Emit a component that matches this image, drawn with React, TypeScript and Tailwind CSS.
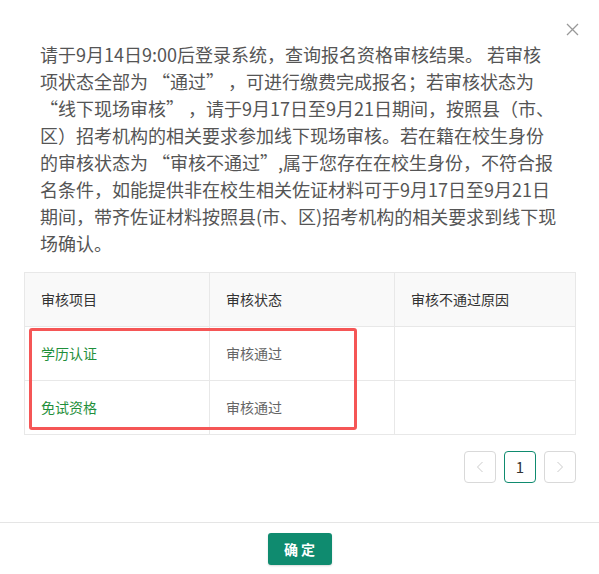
import React from "react";

const lines = [
  "请于9月14日9:00后登录系统，查询报名资格审核结果。 若审核",
  "项状态全部为 “通过” ，可进行缴费完成报名；若审核状态为",
  "“线下现场审核” ，请于9月17日至9月21日期间，按照县（市、",
  "区）招考机构的相关要求参加线下现场审核。若在籍在校生身份",
  "的审核状态为 “审核不通过”,属于您存在在校生身份，不符合报",
  "名条件，如能提供非在校生相关佐证材料可于9月17日至9月21日",
  "期间，带齐佐证材料按照县(市、区)招考机构的相关要求到线下现",
  "场确认。",
];

const rows = [
  { item: "学历认证", status: "审核通过" },
  { item: "免试资格", status: "审核通过" },
];

export default function App() {
  return (
    <div
      className="relative w-[599px] h-[574px] bg-white overflow-hidden"
      style={{ fontFamily: '"Noto Sans CJK SC", "Noto Sans", sans-serif' }}
    >
      <button className="absolute left-[565px] top-[22px] w-[15px] h-[15px] flex items-center justify-center">
        <svg width="13" height="13" viewBox="0 0 13 13">
          <path d="M1 1 L12 12 M12 1 L1 12" stroke="#999" strokeWidth="1.3" fill="none" />
        </svg>
      </button>

      <div className="pt-[41px] px-10 text-[18px] leading-[27px] text-[#555]">
        {lines.map((l, i) => (
          <span key={i} className="block whitespace-nowrap">
            {l}
          </span>
        ))}
      </div>

      <div className="relative ml-6 mt-[15px] w-[552px] border border-[#e8e8e8] text-[14px]">
        <div className="grid grid-cols-[185px_185px_1fr] h-[54px] bg-[#f9f9f9] border-b border-[#e8e8e8] text-[#333]">
          <div className="flex items-center pl-4 border-r border-[#e8e8e8]">审核项目</div>
          <div className="flex items-center pl-4 border-r border-[#e8e8e8]">审核状态</div>
          <div className="flex items-center pl-4">审核不通过原因</div>
        </div>
        {rows.map((r, i) => (
          <div
            key={i}
            className={
              i === 0
                ? "grid grid-cols-[185px_185px_1fr] h-[54px] border-b border-[#e8e8e8]"
                : "grid grid-cols-[185px_185px_1fr] h-[53px]"
            }
          >
            <div className="flex items-center pl-4 border-r border-[#e8e8e8] text-[#1f8f3b]">{r.item}</div>
            <div className="flex items-center pl-4 border-r border-[#e8e8e8] text-[#666]">{r.status}</div>
            <div className="flex items-center pl-4"></div>
          </div>
        ))}
        <div className="absolute left-[4px] top-[55px] w-[328px] h-[102px] border-[3px] border-[#f55656] rounded-[3px] pointer-events-none" />
      </div>

      <div className="flex justify-end gap-2 mt-4 mr-[23px]">
        <button className="w-8 h-8 border border-[#d9d9d9] rounded-sm flex items-center justify-center">
          <svg width="8" height="12" viewBox="0 0 8 12">
            <path d="M6.5 1 L1.5 6 L6.5 11" stroke="#ccc" strokeWidth="1" fill="none" />
          </svg>
        </button>
        <button className="w-8 h-8 border border-[#0f8b6f] rounded-sm flex items-center justify-center text-[15px] text-[#333]">
          1
        </button>
        <button className="w-8 h-8 border border-[#d9d9d9] rounded-sm flex items-center justify-center">
          <svg width="8" height="12" viewBox="0 0 8 12">
            <path d="M1.5 1 L6.5 6 L1.5 11" stroke="#ccc" strokeWidth="1" fill="none" />
          </svg>
        </button>
      </div>

      <div className="mt-[39px] border-t border-[#e5e5e5] pt-[10px] flex justify-center">
        <button className="w-16 h-8 bg-[#0f8b6f] rounded-[3px] text-white text-[14px] font-bold shadow-[0_1px_2px_rgba(0,0,0,0.15)]">
          确 定
        </button>
      </div>
    </div>
  );
}
